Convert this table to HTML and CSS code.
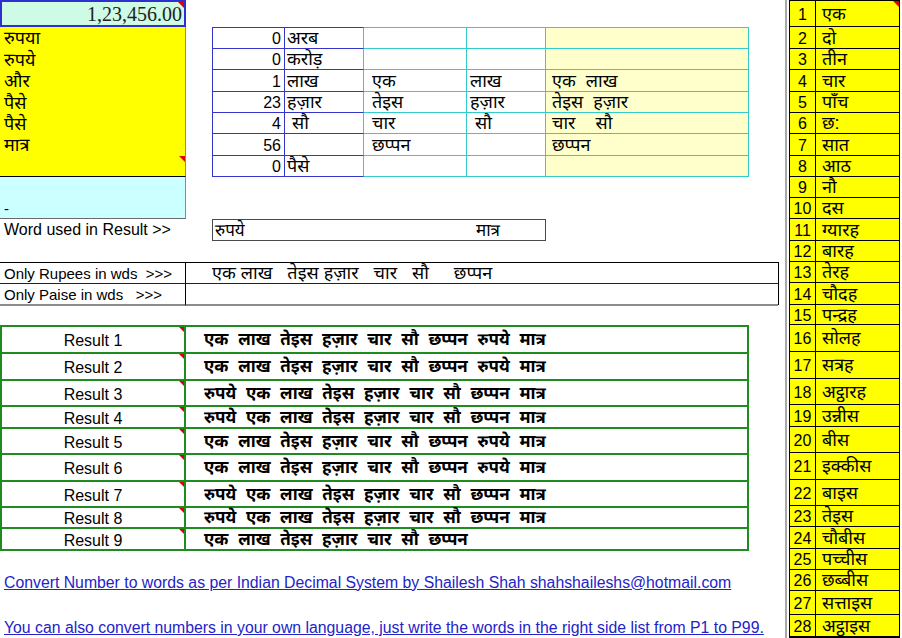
FILE: index.html
```html
<!DOCTYPE html>
<html lang="hi">
<head>
<meta charset="utf-8">
<title>Number to Words</title>
<link rel="stylesheet" href="styles.css">
</head>
<body>
<div class="sheet">
  <div class="input-cell">1,23,456.00<span class="note"></span></div>

  <div class="words-block">
    <div class="w">रुपया</div>
    <div class="w">रुपये</div>
    <div class="w">और</div>
    <div class="w">पैसे</div>
    <div class="w">पैसे</div>
    <div class="w">मात्र</div>
    <div class="w noted"><span class="note"></span></div>
  </div>

  <div class="dash-block">
    <div class="w"></div>
    <div class="w dash">-</div>
  </div>

  <div class="mid">
    <div class="m num top">0</div><div class="m wd top">अरब</div><div class="m e top"></div><div class="m f top"></div><div class="m g top"></div>
    <div class="m num">0</div><div class="m wd">करोड़</div><div class="m e"></div><div class="m f"></div><div class="m g"></div>
    <div class="m num">1</div><div class="m wd">लाख</div><div class="m e">एक</div><div class="m f">लाख</div><div class="m g">एक  लाख</div>
    <div class="m num">23</div><div class="m wd">हज़ार</div><div class="m e">तेइस</div><div class="m f">हज़ार</div><div class="m g">तेइस  हज़ार</div>
    <div class="m num">4</div><div class="m wd"> सौ</div><div class="m e">चार</div><div class="m f"> सौ</div><div class="m g">चार    सौ</div>
    <div class="m num">56</div><div class="m wd"></div><div class="m e">छप्पन</div><div class="m f"></div><div class="m g">छप्पन</div>
    <div class="m num">0</div><div class="m wd">पैसे</div><div class="m e"></div><div class="m f"></div><div class="m g"></div>
  </div>

  <div class="used-label">Word used in Result &gt;&gt;</div>
  <div class="used-box">
    <span class="u1">रुपये</span>
    <span class="u4">मात्र</span>
  </div>

  <div class="only">
    <div class="o lab">Only Rupees in wds  &gt;&gt;&gt;</div>
    <div class="o val">एक लाख   तेइस हज़ार   चार   सौ     छप्पन</div>
    <div class="o lab last">Only Paise in wds   &gt;&gt;&gt;</div>
    <div class="o val last"></div>
  </div>

  <div class="results">
    <div class="r lab">Result 1<span class="note"></span></div><div class="r txt">एक लाख तेइस हज़ार चार सौ छप्पन रुपये मात्र</div>
    <div class="r lab">Result 2<span class="note"></span></div><div class="r txt">एक लाख तेइस हज़ार चार सौ छप्पन रुपये मात्र</div>
    <div class="r lab">Result 3<span class="note"></span></div><div class="r txt">रुपये एक लाख तेइस हज़ार चार सौ छप्पन मात्र</div>
    <div class="r lab">Result 4<span class="note"></span></div><div class="r txt">रुपये एक लाख तेइस हज़ार चार सौ छप्पन मात्र</div>
    <div class="r lab">Result 5<span class="note"></span></div><div class="r txt">एक लाख तेइस हज़ार चार सौ छप्पन रुपये मात्र</div>
    <div class="r lab">Result 6<span class="note"></span></div><div class="r txt">एक लाख तेइस हज़ार चार सौ छप्पन रुपये मात्र</div>
    <div class="r lab">Result 7<span class="note"></span></div><div class="r txt">रुपये एक लाख तेइस हज़ार चार सौ छप्पन मात्र</div>
    <div class="r lab">Result 8<span class="note"></span></div><div class="r txt">रुपये एक लाख तेइस हज़ार चार सौ छप्पन मात्र</div>
    <div class="r lab">Result 9<span class="note"></span></div><div class="r txt">एक लाख तेइस हज़ार चार सौ छप्पन</div>
  </div>

  <a class="link link1" href="#">Convert Number to words as per Indian Decimal System by Shailesh Shah shahshaileshs@hotmail.com</a>
  <a class="link link2" href="#">You can also convert numbers in your own language, just write the words in the right side list from P1 to P99.</a>

  <div class="split"></div>

  <div class="list">
    <div class="n">1</div><div class="t">एक<span class="note"></span></div>
    <div class="n">2</div><div class="t">दो</div>
    <div class="n">3</div><div class="t">तीन</div>
    <div class="n">4</div><div class="t">चार</div>
    <div class="n">5</div><div class="t">पाँच</div>
    <div class="n">6</div><div class="t">छ:</div>
    <div class="n">7</div><div class="t">सात</div>
    <div class="n">8</div><div class="t">आठ</div>
    <div class="n">9</div><div class="t">नौ</div>
    <div class="n">10</div><div class="t">दस</div>
    <div class="n">11</div><div class="t">ग्यारह</div>
    <div class="n">12</div><div class="t">बारह</div>
    <div class="n">13</div><div class="t">तेरह</div>
    <div class="n">14</div><div class="t">चौदह</div>
    <div class="n">15</div><div class="t">पन्द्रह</div>
    <div class="n">16</div><div class="t">सोलह</div>
    <div class="n">17</div><div class="t">सत्रह</div>
    <div class="n">18</div><div class="t">अट्ठारह</div>
    <div class="n">19</div><div class="t">उन्नीस</div>
    <div class="n">20</div><div class="t">बीस</div>
    <div class="n">21</div><div class="t">इक्कीस</div>
    <div class="n">22</div><div class="t">बाइस</div>
    <div class="n">23</div><div class="t">तेइस</div>
    <div class="n">24</div><div class="t">चौबीस</div>
    <div class="n">25</div><div class="t">पच्चीस</div>
    <div class="n">26</div><div class="t">छब्बीस</div>
    <div class="n">27</div><div class="t">सत्ताइस</div>
    <div class="n">28</div><div class="t">अट्ठाइस</div>
  </div>
</div>
</body>
</html>
```

FILE: styles.css
```css
* { box-sizing: border-box; }

html, body {
  margin: 0;
  padding: 0;
  background: #ffffff;
}

body {
  font-family: "Liberation Sans", Arial, "Noto Sans Devanagari", "Noto Sans", sans-serif;
  font-size: 15px;
  color: #000;
}

.sheet {
  display: grid;
  width: 902px;
  height: 638px;
  overflow: hidden;
  grid-template-columns: 186px 26px 73px 79px 103px 79px 203px 30px 10px 26px 85px 2px;
  grid-template-rows: 27px 22px 21px 22px 21px 21px 22px 21px 21px 21px 22px 21px 21px 22px 20px 27px 27px 26px 22px 26px 27px 26px 21px 22px 21px 21px 24px 22px 1px;
}

.note {
  position: absolute;
  top: 0;
  right: 0;
  width: 0;
  height: 0;
  border-left: 6px solid transparent;
  border-top: 6px solid #e00000;
}

/* input cell */
.input-cell {
  grid-area: 1 / 1 / 2 / 2;
  position: relative;
  display: flex;
  align-items: center;
  justify-content: flex-end;
  padding-right: 2px;
  padding-top: 2px;
  background: #cdfbe6;
  border: 2px solid #2f2fcf;
  font-family: "Liberation Serif", "Times New Roman", serif;
  font-size: 20px;
  color: #222;
}

/* yellow word block */
.words-block {
  grid-area: 2 / 1 / 9 / 2;
  display: grid;
  grid-template-rows: 22px 21px 22px 21px 21px 22px 20px;
  background: #ffff00;
  border-right: 1px solid #8a8a8a;
  border-bottom: 1px solid #000;
}

.w {
  position: relative;
  display: flex;
  align-items: center;
  padding-left: 4px;
  white-space: pre;
  font-size: 18px;
  line-height: 1;
}

.w.dash { font-size: 15px; }

.dash-block {
  grid-area: 9 / 1 / 11 / 2;
  display: grid;
  grid-template-rows: 21px 20px;
  background: #ccffff;
  border-right: 1px solid #8a8a8a;
  border-bottom: 1px solid #6a6a6a;
}

/* middle table */
.mid {
  grid-area: 2 / 3 / 9 / 8;
  display: grid;
  grid-template-columns: 73px 79px 103px 79px 203px;
  grid-template-rows: 22px 21px 22px 21px 21px 22px 21px;
}

.m {
  display: flex;
  align-items: center;
  white-space: pre;
  font-size: 18px;
  line-height: 1;
  border-right: 1px solid #33cccc;
  border-bottom: 1px solid #33cccc;
}

.m.top { border-top: 1px solid #33cccc; }

.m.num {
  justify-content: flex-end;
  padding-right: 3px;
  padding-top: 2px;
  font-size: 16px;
  border-left: 1px solid #3535c8;
  border-right: 1px solid #3535c8;
  border-bottom: 1px solid #3535c8;
}

.m.num.top, .m.wd.top { border-top: 1px solid #3535c8; }

.m.wd {
  padding-left: 2px;
  border-bottom: 1px solid #3535c8;
}

.m.e { padding-left: 8px; }
.m.f { padding-left: 3px; }
.m.g {
  padding-left: 6px;
  background: #ffffcc;
}

/* word used */
.used-label {
  grid-area: 11 / 1 / 12 / 2;
  display: flex;
  align-items: center;
  padding-left: 4px;
  font-size: 16px;
}

.used-box {
  grid-area: 11 / 3 / 12 / 7;
  display: grid;
  grid-template-columns: 73px 79px 103px 1fr;
  align-items: center;
  border: 1px solid #4a4a4a;
  font-size: 17px;
  line-height: 1;
}

.u1 { grid-column: 1; padding-left: 2px; }
.u4 { grid-column: 4; padding-left: 8px; }

/* only rupees / paise */
.only {
  grid-area: 13 / 1 / 15 / 9;
  display: grid;
  grid-template-columns: 186px 1fr;
  grid-template-rows: 21px 22px;
  border-top: 1px solid #000;
  border-right: 1px solid #000;
}

.o {
  display: flex;
  align-items: center;
  white-space: pre;
  border-bottom: 1px solid #222;
}

.o.lab {
  padding-left: 4px;
  padding-top: 1px;
  border-right: 1px solid #000;
}

.o.val {
  padding-left: 26px;
  font-size: 18px;
  line-height: 1;
}

.o.last { border-bottom: 2px solid #8c8c8c; }

/* results */
.results {
  grid-area: 16 / 1 / 25 / 8;
  display: grid;
  grid-template-columns: 182px 1fr;
  grid-template-rows: 25px 25px 24px 20px 24px 25px 24px 19px 20px;
  gap: 2px;
  padding: 2px;
  background: #1e8c1e;
  align-self: start;
}

.r {
  position: relative;
  display: flex;
  align-items: center;
  background: #fff;
}

.r.lab {
  justify-content: center;
  font-size: 16px;
  padding-top: 3px;
}

.r.lab .note {
  border-left-width: 5px;
  border-top-width: 5px;
}

.r.txt {
  padding-left: 18px;
  font-size: 17px;
  line-height: 1;
  font-weight: bold;
  word-spacing: 5px;
}

/* links */
.link {
  display: flex;
  align-items: center;
  padding-left: 4px;
  padding-top: 4px;
  color: #2323c8;
  font-size: 15.8px;
  text-decoration: underline;
  white-space: nowrap;
}

.link1 { grid-area: 26 / 1 / 27 / 10; }
.link2 { grid-area: 28 / 1 / 29 / 10; }

/* split line */
.split {
  grid-area: 1 / 9 / 30 / 10;
  width: 2px;
  margin-left: 6px;
  background: #a8a8a8;
}

/* right list */
.list {
  grid-area: 1 / 10 / 30 / 12;
  display: grid;
  grid-template-columns: 25px 1fr;
  grid-template-rows: 25px 21px 20px 21px 20px 20px 21px 20px 20px 20px 21px 20px 20px 21px 19px 26px 26px 25px 21px 25px 26px 25px 20px 21px 20px 20px 23px 21px;
  gap: 1px;
  padding: 1px 1px 0 1px;
  background: #000;
}

.n, .t {
  position: relative;
  display: flex;
  align-items: center;
  background: #ffff00;
}

.n {
  justify-content: center;
  font-size: 16px;
  padding-top: 2px;
}

.t {
  padding-left: 6px;
  font-size: 18px;
  line-height: 1;
}
```
